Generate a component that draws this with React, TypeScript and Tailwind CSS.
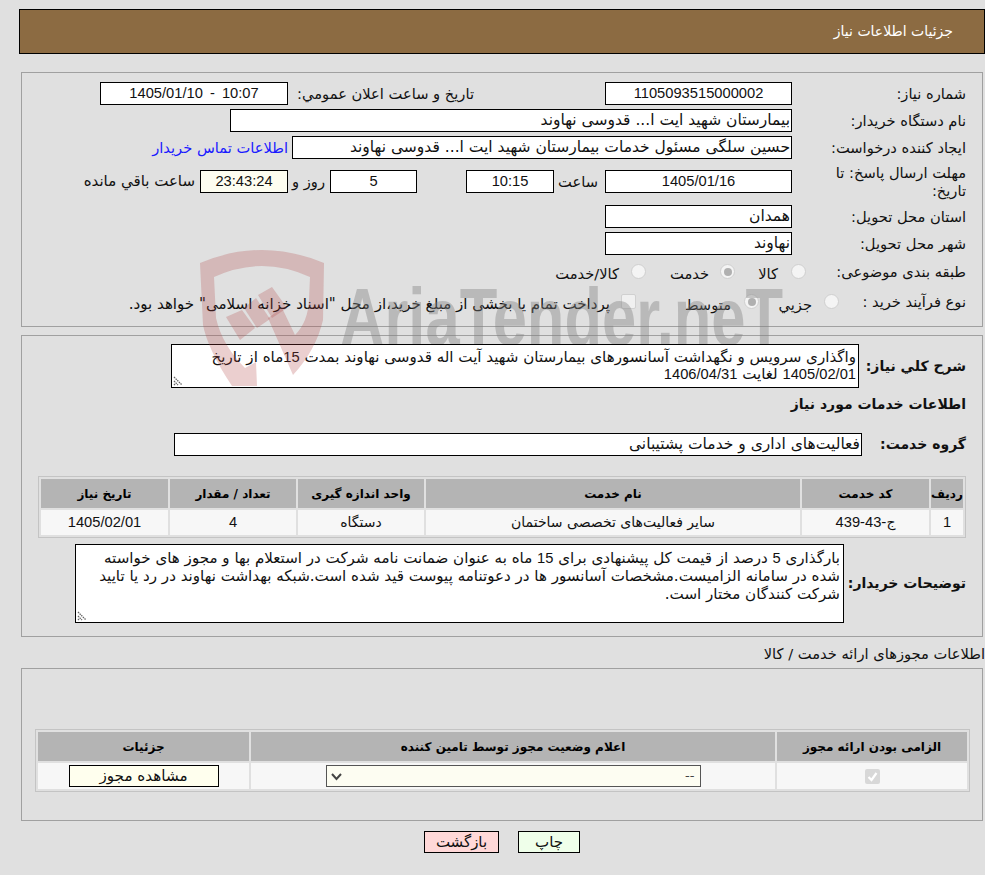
const inputBox = 'border border-black bg-white h-[23px] flex items-center text-[15.5px] leading-none whitespace-nowrap overflow-hidden'
const label = 'text-[14.67px] whitespace-nowrap'
const boldLabel = 'font-bold text-[14px] whitespace-nowrap'

function Field({ className, children }: { className: string; children: React.ReactNode }) {
  return <div className={`${inputBox} ${className}`}>{children}</div>
}

// digits are narrower than the arabic text in the reference
function N({ children }: { children: React.ReactNode }) {
  return <span className="font-['Liberation_Sans',sans-serif] text-[14.7px]">{children}</span>
}

function Radio({ checked }: { checked?: boolean }) {
  return (
    <span className="shrink-0 w-[15px] h-[15px] rounded-full bg-[#f4f4f4] border border-[#cfcfcf] flex items-center justify-center">
      {checked && <span className="w-[8px] h-[8px] rounded-full bg-[#b0b0b0]" />}
    </span>
  )
}

function Grip() {
  return (
    <svg className="absolute left-[1px] bottom-[1px]" width="11" height="11" viewBox="0 0 11 11">
      <path d="M1 2L9 10M1 6L5 10M1 9L2 10" stroke="#666" strokeWidth="1.3" strokeDasharray="1.5 .8" />
    </svg>
  )
}

function Watermark() {
  return (
    <div className="absolute left-0 top-0 w-[985px] h-[875px] pointer-events-none overflow-hidden">
      <svg className="absolute left-[195px] top-[245px]" width="140" height="141" viewBox="195 245 140 141">
        <g fill="#b04040" fillOpacity=".25">
          <path d="M200 263Q262 237 324 263L323 320Q316 350 293 375L268 318L282 308L295 335Q308 322 309 300L310 277Q262 255 214 277L216 318Q222 345 245 368L256 362L257 386L232 386Q208 350 203 325Z" />
          <path d="M258 295L272 287L287 308L272 318Z" />
          <path d="M244 308L256 298L270 319L257 328Z" />
          <path d="M226 317L242 310L255 328L240 340Z" />
        </g>
      </svg>
      <div className="absolute left-[330px] top-[260px] w-[500px] h-[84px] overflow-hidden">
        <div dir="ltr" className="absolute left-[10px] top-[16px] font-['Liberation_Sans',sans-serif] font-bold text-[82px] leading-none text-[#808080]/40 origin-left scale-x-[.75] whitespace-nowrap">
          AriaTender.neT
        </div>
      </div>
    </div>
  )
}

const Th = ({ children, className }: { children: React.ReactNode; className?: string }) => (
  <th className={`bg-[#b4b4b4] h-[29px] text-[12px] font-bold text-black text-center p-0 ${className ?? ''}`}>{children}</th>
)
const Td = ({ children, className }: { children: React.ReactNode; className?: string }) => (
  <td className={`bg-[#f7f7f7] text-[14px] text-center p-0 ${className ?? ''}`}>{children}</td>
)

export default function App() {
  return (
    <div dir="rtl" className="relative w-[985px] h-[875px] bg-[#e0e0e0] font-['DejaVu_Sans',sans-serif] text-[14px] text-[#111] overflow-hidden">
      <div className="absolute top-[9px] left-[19px] w-[966px] h-[45px] bg-[#8c6b42] border border-black flex items-center pr-[31px] text-white text-[14px]">
        جزئیات اطلاعات نیاز
      </div>

      <div className="absolute left-[21px] top-[72px] w-[962px] h-[255px] border border-[#a0a0a0] pt-[9px] pr-[16px]">
        <div className="flex items-center h-[23px]">
          <div className={`w-[174px] ${label}`}>شماره نیاز:</div>
          <Field className="w-[187px] justify-center"><N>1105093515000002</N></Field>
          <div className="w-[131px]" />
          <div className={`w-[186px] ${label}`}>تاریخ و ساعت اعلان عمومي:</div>
          <Field className="w-[188px] justify-center [word-spacing:3px]"><span dir="ltr"><N>1405/01/10 - 10:07</N></span></Field>
        </div>
        <div className="flex items-center h-[23px] mt-[4px]">
          <div className={`w-[174px] ${label}`}>نام دستگاه خریدار:</div>
          <Field className="w-[562px] pr-[1px]">بیمارستان شهید ایت ا... قدوسی نهاوند</Field>
        </div>
        <div className="flex items-center h-[23px] mt-[4px]">
          <div className={`w-[174px] ${label}`}>ایجاد کننده درخواست:</div>
          <Field className="w-[500px] pr-[1px]">حسین سلگی مسئول خدمات بیمارستان شهید ایت ا... قدوسی نهاوند</Field>
          <a className={`text-[#1a1aff] mr-[4px] ${label}`}>اطلاعات تماس خریدار</a>
        </div>
        <div className="flex items-start h-[46px]">
          <div className="w-[174px] shrink-0 pl-[24px] text-[14.67px] leading-[18px] pt-[5px]">مهلت ارسال پاسخ: تا تاریخ:</div>
          <div className="flex items-center h-[23px] mt-[11px]">
            <Field className="w-[187px] justify-center"><N>1405/01/16</N></Field>
            <span className={`w-[51px] pr-[7px] ${label}`}>ساعت</span>
            <Field className="w-[88px] justify-center"><N>10:15</N></Field>
            <span className="w-[49px]" />
            <Field className="w-[87px] justify-center"><N>5</N></Field>
            <span className={`w-[42px] pr-[5px] ${label}`}>روز و</span>
            <Field className="w-[88px] justify-center !bg-[#fdfdf0]"><N>23:43:24</N></Field>
            <span className="pr-[5px] text-[15px] whitespace-nowrap">ساعت باقي مانده</span>
          </div>
        </div>
        <div className="flex items-center h-[23px]">
          <div className={`w-[174px] ${label}`}>استان محل تحویل:</div>
          <Field className="w-[187px] pr-[1px]">همدان</Field>
        </div>
        <div className="flex items-center h-[23px] mt-[4px]">
          <div className={`w-[174px] ${label}`}>شهر محل تحویل:</div>
          <Field className="w-[187px] pr-[1px]">نهاوند</Field>
        </div>
        <div className="flex items-center h-[23px] mt-[5px]">
          <div className={`w-[160px] ${label}`}>طبقه بندی موضوعی:</div>
          <Radio />
          <span className={`w-[56px] pr-[13px] pt-[4px] ${label}`}>کالا</span>
          <Radio checked />
          <span className={`w-[74px] pr-[11px] pt-[4px] ${label}`}>خدمت</span>
          <Radio />
          <span className={`pr-[12px] pt-[4px] ${label}`}>کالا/خدمت</span>
        </div>
        <div className="flex items-center h-[23px] mt-[7px]">
          <div className={`w-[127px] ${label}`}>نوع فرآیند خرید :</div>
          <Radio />
          <span className={`w-[65px] pr-[12px] pt-[6px] ${label}`}>جزیي</span>
          <Radio checked />
          <span className={`w-[108px] pr-[13px] pt-[6px] ${label}`}>متوسط</span>
          <span className="shrink-0 w-[15px] h-[15px] rounded-[2px] bg-[#f0f0f0] border border-[#d0d0d0]" />
          <span className="pr-[11px] pt-[6px] text-[15.1px] whitespace-nowrap">پرداخت تمام یا بخشی از مبلغ خرید،از محل "اسناد خزانه اسلامی" خواهد بود.</span>
        </div>
      </div>

      <div className="absolute left-[21px] top-[335px] w-[962px] h-[302px] border border-[#a0a0a0]">
        <div className="flex items-center mt-[8px] pr-[16px]">
          <div className={`w-[107px] ${boldLabel}`}>شرح کلي نیاز:</div>
          <div className="relative w-[688px] h-[44px] border border-black bg-white text-[15.1px] leading-[17px] pt-[4px] pr-[2px] pl-[4px]">
            واگذاری سرویس و نگهداشت آسانسورهای بیمارستان شهید آیت اله قدوسی نهاوند بمدت <N>15</N>ماه از تاریخ <N>1405/02/01</N> لغایت <N>1406/04/31</N>
            <Grip />
          </div>
        </div>
        <div className={`mt-[7px] pr-[16px] leading-[18px] ${boldLabel}`}>اطلاعات خدمات مورد نیاز</div>
        <div className="flex items-center mt-[20px] pr-[16px]">
          <div className={`w-[104px] ${boldLabel}`}>گروه خدمت:</div>
          <Field className="w-[688px] pr-[1px]">فعالیت‌های اداری و خدمات پشتیبانی</Field>
        </div>
        <table className="w-[928px] mr-[16px] mt-[20px] border border-[#c4c4c4] border-separate border-spacing-[2px] table-fixed">
          <thead>
            <tr>
              <Th className="w-[32px]">ردیف</Th>
              <Th className="w-[127px]">کد خدمت</Th>
              <Th>نام خدمت</Th>
              <Th className="w-[126px]">واحد اندازه گیری</Th>
              <Th className="w-[126px]">تعداد / مقدار</Th>
              <Th className="w-[127px]">تاریخ نیاز</Th>
            </tr>
          </thead>
          <tbody>
            <tr className="h-[25px]">
              <Td><N>1</N></Td>
              <Td>ج-<N>43-439</N></Td>
              <Td>سایر فعالیت‌های تخصصی ساختمان</Td>
              <Td>دستگاه</Td>
              <Td><N>4</N></Td>
              <Td><N>1405/02/01</N></Td>
            </tr>
          </tbody>
        </table>
        <div className="flex items-center mt-[6px] pr-[16px]">
          <div className={`w-[122px] ${boldLabel}`}>توضیحات خریدار:</div>
          <div className="relative w-[769px] h-[79px] border border-black bg-white text-[15.1px] leading-[18px] pt-[4px] pr-[3px] whitespace-nowrap">
            بارگذاری <N>5</N> درصد از قیمت کل پیشنهادی برای <N>15</N> ماه به عنوان ضمانت نامه شرکت در استعلام بها و مجوز های خواسته<br />
            شده در سامانه الزامیست.مشخصات آسانسور ها در دعوتنامه پیوست قید شده است.شبکه بهداشت نهاوند در رد یا تایید<br />
            شرکت کنندگان مختار است.
            <Grip />
          </div>
        </div>
      </div>

      <div className={`absolute right-0 top-[645px] leading-[17px] ${label}`}>اطلاعات مجوزهای ارائه خدمت / کالا</div>

      <div className="absolute left-[21px] top-[668px] w-[962px] h-[153px] border border-[#a0a0a0] pt-[60px] pr-[12px]">
        <table className="w-[935px] border border-[#c4c4c4] border-separate border-spacing-[2px] table-fixed">
          <thead>
            <tr>
              <Th className="w-[190px]">الزامی بودن ارائه مجوز</Th>
              <Th>اعلام وضعیت مجوز توسط تامین کننده</Th>
              <Th className="w-[211px]">جزئیات</Th>
            </tr>
          </thead>
          <tbody>
            <tr className="h-[26px]">
              <Td>
                <span className="inline-flex w-[15px] h-[15px] mt-[4px] rounded-[2px] bg-[#d8d8d8] items-center justify-center">
                  <svg width="11" height="11" viewBox="0 0 11 11"><path d="M1.5 6L4.5 9L9.5 2" fill="none" stroke="#fff" strokeWidth="2.2" /></svg>
                </span>
              </Td>
              <Td>
                <div className="w-[375px] h-[22px] mx-auto border border-[#555] bg-[#fdfdf2] flex items-center justify-between pr-[5px] pl-[3px] text-[13px] text-[#444]">
                  <span>--</span>
                  <svg width="13" height="9" viewBox="0 0 13 9"><path d="M2 2L6.5 7L11 2" fill="none" stroke="#444" strokeWidth="2" /></svg>
                </div>
              </Td>
              <Td>
                <div className="w-[150px] h-[22px] mx-auto border border-black bg-[#ffffee] flex items-center justify-center text-[15.2px]">مشاهده مجوز</div>
              </Td>
            </tr>
          </tbody>
        </table>
      </div>

      <div className="absolute top-[831px] left-[518px] w-[62px] h-[22px] border border-black bg-[#efffea] flex items-center justify-center text-[15px]">چاپ</div>
      <div className="absolute top-[831px] left-[424px] w-[75px] h-[22px] border border-black bg-[#ffd8d8] flex items-center justify-center text-[15px]">بازگشت</div>

      <Watermark />
    </div>
  )
}
